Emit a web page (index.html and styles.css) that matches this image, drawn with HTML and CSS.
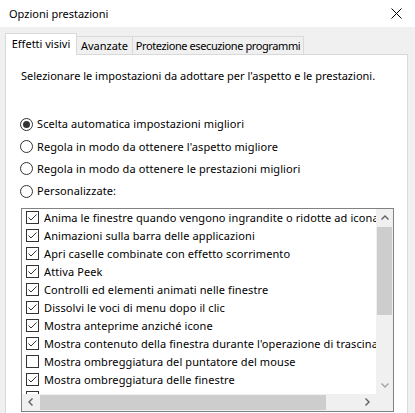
FILE: index.html
```html
<!DOCTYPE html>
<html lang="it">
<head>
<meta charset="utf-8">
<title>Opzioni prestazioni</title>
<link rel="stylesheet" href="styles.css">
</head>
<body>
<svg class="defs" width="0" height="0" aria-hidden="true">
  <symbol id="cb-on" viewBox="0 0 13 13">
    <rect x="0.5" y="0.5" width="12" height="12" fill="#fff" stroke="#333"/>
    <path d="M2.5 6.5 L5 9 L10.5 3.5" fill="none" stroke="#333" stroke-width="1"/>
  </symbol>
  <symbol id="cb-off" viewBox="0 0 13 13">
    <rect x="0.5" y="0.5" width="12" height="12" fill="#fff" stroke="#333"/>
  </symbol>
</svg>
<div class="window">
  <div class="titlebar">
    <span class="title">Opzioni prestazioni</span>
    <svg class="close" width="11" height="11" viewBox="0 0 11 11"><path d="M0.5 0.5 L10.5 10.5 M10.5 0.5 L0.5 10.5" stroke="#000" stroke-width="1" fill="none"/></svg>
  </div>
  <div class="tabs">
    <div class="tab tab-active">Effetti visivi</div>
    <div class="tab tab-adv">Avanzate</div>
    <div class="tab tab-dep">Protezione esecuzione programmi</div>
  </div>
  <div class="panel">
    <p class="desc">Selezionare le impostazioni da adottare per l'aspetto e le prestazioni.</p>
    <div class="radios">
      <div class="radio"><span class="rb rb-on"></span>Scelta automatica impostazioni migliori</div>
      <div class="radio"><span class="rb"></span>Regola in modo da ottenere l'aspetto migliore</div>
      <div class="radio"><span class="rb"></span>Regola in modo da ottenere le prestazioni migliori</div>
      <div class="radio"><span class="rb"></span>Personalizzate:</div>
    </div>
    <div class="listbox">
      <div class="items">
        <div class="item"><svg class="cb"><use href="#cb-on"/></svg>Anima le finestre quando vengono ingrandite o ridotte ad icona</div>
        <div class="item"><svg class="cb"><use href="#cb-on"/></svg>Animazioni sulla barra delle applicazioni</div>
        <div class="item"><svg class="cb"><use href="#cb-on"/></svg>Apri caselle combinate con effetto scorrimento</div>
        <div class="item"><svg class="cb"><use href="#cb-on"/></svg>Attiva Peek</div>
        <div class="item"><svg class="cb"><use href="#cb-on"/></svg>Controlli ed elementi animati nelle finestre</div>
        <div class="item"><svg class="cb"><use href="#cb-on"/></svg>Dissolvi le voci di menu dopo il clic</div>
        <div class="item"><svg class="cb"><use href="#cb-on"/></svg>Mostra anteprime anziché icone</div>
        <div class="item"><svg class="cb"><use href="#cb-on"/></svg>Mostra contenuto della finestra durante l'operazione di trascinamento</div>
        <div class="item"><svg class="cb"><use href="#cb-off"/></svg>Mostra ombreggiatura del puntatore del mouse</div>
        <div class="item"><svg class="cb"><use href="#cb-on"/></svg>Mostra ombreggiatura delle finestre</div>
        <div class="item"><svg class="cb"><use href="#cb-on"/></svg></div>
      </div>
      <div class="vscroll">
        <div class="sbtn"><svg width="8" height="5" viewBox="0 0 8 5"><path d="M0.5 4.5 L4 1 L7.5 4.5" fill="none" stroke="#606060" stroke-width="1.4"/></svg></div>
        <div class="vthumb"></div>
        <div class="spacer"></div>
        <div class="sbtn"><svg width="8" height="5" viewBox="0 0 8 5"><path d="M0.5 0.5 L4 4 L7.5 0.5" fill="none" stroke="#a3a3a3" stroke-width="1.4"/></svg></div>
      </div>
      <div class="hscroll">
        <div class="sbtn"><svg width="5" height="8" viewBox="0 0 5 8"><path d="M4.5 0.5 L1 4 L4.5 7.5" fill="none" stroke="#606060" stroke-width="1.4"/></svg></div>
        <div class="hthumb"></div>
        <div class="spacer"></div>
        <div class="sbtn"><svg width="5" height="8" viewBox="0 0 5 8"><path d="M0.5 0.5 L4 4 L0.5 7.5" fill="none" stroke="#606060" stroke-width="1.4"/></svg></div>
      </div>
      <div class="corner"></div>
    </div>
  </div>
</div>
</body>
</html>
```

FILE: styles.css
```css
* { box-sizing: border-box; }

html, body {
  margin: 0;
  padding: 0;
}

body {
  width: 415px;
  height: 413px;
  overflow: hidden;
  background: #f0f0f0;
  font-family: "Noto Sans", "Segoe UI", sans-serif;
  font-size: 11px;
  color: #000;
}

.defs {
  display: block;
  width: 0;
  height: 0;
}

.titlebar {
  height: 27px;
  background: #fff;
  display: flex;
  align-items: center;
  justify-content: space-between;
  padding: 0 13px 0 9px;
}

.title {
  font-size: 11px;
  line-height: 16px;
}

.close {
  display: block;
}

.tabs {
  display: flex;
  align-items: flex-end;
  padding: 6px 0 0 5px;
  height: 27px;
}

.tab {
  height: 18px;
  border: 1px solid #d9d9d9;
  border-bottom: none;
  background: #f0f0f0;
  display: flex;
  align-items: center;
  justify-content: center;
  line-height: 16px;
  white-space: nowrap;
}

.tab-active {
  width: 72px;
  height: 22px;
  margin-bottom: -1px;
  background: #fff;
  position: relative;
  z-index: 1;
  padding-bottom: 2px;
}

.tab-adv {
  width: 56px;
  border-left: none;
}

.tab-dep {
  width: 171px;
  border-left: none;
  letter-spacing: -0.4px;
}

.panel {
  margin: 0 7px 0 5px;
  height: 359px;
  border: 1px solid #d9d9d9;
  border-bottom: none;
  background: #fff;
  padding: 13px 0 0 15px;
}

.desc {
  margin: 0;
  line-height: 16px;
}

.radios {
  margin-top: 29px;
  display: flex;
  flex-direction: column;
}

.radio {
  height: 22.4px;
  display: flex;
  align-items: center;
  line-height: 16px;
  white-space: nowrap;
  letter-spacing: 0.1px;
}

.rb {
  width: 13px;
  height: 13px;
  border: 1px solid #333;
  border-radius: 50%;
  margin: 0 4px 0 -1px;
  flex: none;
  display: flex;
  align-items: center;
  justify-content: center;
}

.rb-on::after {
  content: "";
  width: 7px;
  height: 7px;
  border-radius: 50%;
  background: #333;
}

.listbox {
  margin-top: 5px;
  width: 373px;
  height: 204px;
  border: 1px solid #828282;
  display: grid;
  grid-template-columns: 1fr 17px;
  grid-template-rows: 1fr 17px;
}

.items {
  overflow: hidden;
  min-width: 0;
  min-height: 0;
}

.item {
  height: 18px;
  display: flex;
  align-items: center;
  padding-left: 4px;
  white-space: nowrap;
  line-height: 16px;
  letter-spacing: 0.1px;
}

.cb {
  width: 13px;
  height: 13px;
  flex: none;
  margin-right: 5px;
}

.vscroll {
  background: #f0f0f0;
  display: flex;
  flex-direction: column;
}

.hscroll {
  background: #f0f0f0;
  display: flex;
}

.sbtn {
  width: 17px;
  height: 17px;
  flex: none;
  display: flex;
  align-items: center;
  justify-content: center;
}

.sbtn svg {
  display: block;
}

.vthumb {
  flex: none;
  height: 88px;
  margin: 1px 1px 0 1px;
  background: #cdcdcd;
}

.hthumb {
  flex: none;
  width: 286px;
  margin: 1px 0 1px 1px;
  background: #cdcdcd;
}

.spacer {
  flex: 1;
}

.corner {
  background: #f0f0f0;
}
```
